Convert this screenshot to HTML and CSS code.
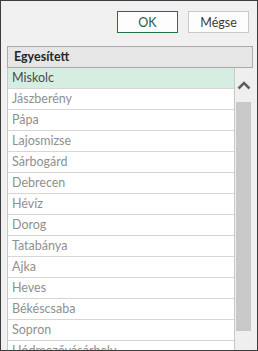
FILE: index.html
```html
<!DOCTYPE html>
<html>
<head>
<meta charset="utf-8">
<link rel="stylesheet" href="styles.css">
</head>
<body>
<div class="dialog">
  <div class="buttons">
    <button class="btn btn-primary">OK</button>
    <button class="btn">Mégse</button>
  </div>
  <div class="panel">
    <div class="header">Egyesített</div>
    <div class="list">
      <div class="rows">
        <div class="row selected">Miskolc</div>
        <div class="row">Jászberény</div>
        <div class="row">Pápa</div>
        <div class="row">Lajosmizse</div>
        <div class="row">Sárbogárd</div>
        <div class="row">Debrecen</div>
        <div class="row">Hévíz</div>
        <div class="row">Dorog</div>
        <div class="row">Tatabánya</div>
        <div class="row">Ajka</div>
        <div class="row">Heves</div>
        <div class="row">Békéscsaba</div>
        <div class="row">Sopron</div>
        <div class="row">Hódmezővásárhely</div>
      </div>
      <div class="scroll">
        <div class="arrow">
          <svg width="14" height="10" viewBox="0 0 14 10"><path d="M1.5 8.5 L7 3 L12.5 8.5" fill="none" stroke="#606060" stroke-width="2.6"/></svg>
        </div>
        <div class="thumb"></div>
      </div>
    </div>
  </div>
</div>
</body>
</html>
```
FILE: styles.css
```css
html, body {
  margin: 0;
  padding: 0;
}
body {
  width: 258px;
  height: 351px;
  overflow: hidden;
  font-family: Lato, "Noto Sans", sans-serif;
}
.dialog {
  box-sizing: border-box;
  width: 258px;
  height: 351px;
  border: 1px solid #3c3c3c;
  background: #f0f0f0;
  overflow: hidden;
}
.buttons {
  display: flex;
  justify-content: flex-end;
  gap: 10px;
  padding: 10px 8px 0 0;
}
.btn {
  box-sizing: border-box;
  width: 61px;
  height: 22px;
  padding: 0;
  margin: 0;
  border: 1px solid #c9c9c9;
  background: #fdfdfd;
  color: #3a3a3a;
  font-family: Lato, "Noto Sans", sans-serif;
  font-size: 12.5px;
}
.btn-primary {
  border: 1px solid #217346;
  color: #2d5a3e;
}
.panel {
  margin: 13px 0 0 6px;
  width: 246px;
}
.header {
  box-sizing: border-box;
  height: 22px;
  border: 1px solid #ababab;
  background: #e6e6e6;
  color: #262626;
  font-weight: bold;
  font-size: 12.5px;
  line-height: 20px;
  padding-left: 6px;
}
.list {
  display: flex;
}
.rows {
  width: 226px;
  border-left: 1px solid #c8c8c8;
  border-right: 1px solid #c8c8c8;
  background: #fff;
}
.row {
  height: 20px;
  line-height: 20px;
  border-bottom: 1px solid #d6d6d6;
  padding-left: 4px;
  font-size: 12.5px;
  color: #8f8f8f;
  white-space: nowrap;
}
.row.selected {
  background: #d5eee1;
  color: #4a4a4a;
}
.scroll {
  width: 18px;
  background: #efefef;
  display: flex;
  flex-direction: column;
  align-items: center;
}
.arrow {
  height: 34px;
  display: flex;
  align-items: center;
  justify-content: center;
  width: 16px;
}
.thumb {
  width: 15px;
  height: 229px;
  background: #c8c8c8;
  margin-left: -2px;
}
```
